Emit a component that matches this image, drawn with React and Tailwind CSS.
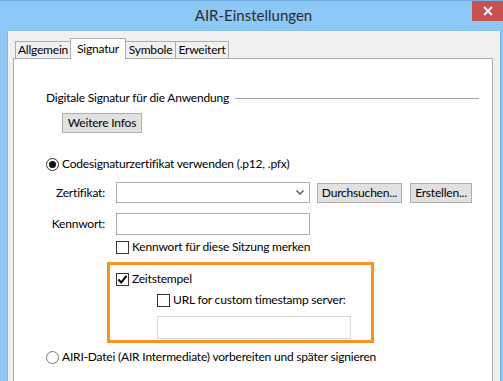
import React from "react";

const font = { fontFamily: "Lato, 'Liberation Sans', sans-serif" };

const Checkbox = ({ checked }) => (
  <span className="flex h-[13px] w-[13px] shrink-0 items-center justify-center border border-[#333] bg-white">
    {checked && (
      <svg width="11" height="11" viewBox="0 0 11 11">
        <path d="M1.5 5.5 L4.2 8.5 L9.5 1.8" fill="none" stroke="#000" strokeWidth="2" />
      </svg>
    )}
  </span>
);

const Radio = ({ checked }) => (
  <span
    className={`flex h-[13px] w-[13px] shrink-0 items-center justify-center rounded-full border bg-white ${
      checked ? "border-[#333]" : "border-[#777]"
    }`}
  >
    {checked && <span className="h-[7px] w-[7px] rounded-full bg-[#111]" />}
  </span>
);

const Button = ({ children, className = "" }) => (
  <div
    className={`flex h-[20px] items-center justify-center border border-[#adadad] bg-[#e1e1e1] text-[12px] text-black ${className}`}
  >
    {children}
  </div>
);

const Tab = ({ label, active, className = "" }) => (
  <div
    className={
      active
        ? `relative z-10 flex h-[21px] items-start justify-center border border-b-0 border-[#acacac] bg-white pt-[1px] ${className}`
        : `flex h-[18px] items-center justify-center border border-[#acacac] bg-[#f0f0f0] ${className}`
    }
  >
    {label}
  </div>
);

export default function App() {
  return (
    <div
      className="flex h-[381px] w-[503px] flex-col overflow-hidden border-t border-[#72aee3] bg-[#8cc7f5] text-[12px] tracking-[-0.2px] text-black"
      style={font}
    >
      {/* Titelleiste */}
      <div className="grid h-[30px] shrink-0 grid-cols-[1fr_auto_1fr]">
        <div />
        <div className="pl-[4px] pt-[3px] text-[15px] leading-[22px] tracking-normal text-[#2b2b2b]">AIR-Einstellungen</div>
        <div className="flex justify-end">
          <div className="flex h-[20px] w-[31px] items-center justify-center bg-[#c75050]">
            <svg width="10" height="10" viewBox="0 0 10 10">
              <path d="M1 1 L9 9 M9 1 L1 9" stroke="#fff" strokeWidth="1.8" />
            </svg>
          </div>
        </div>
      </div>

      {/* Fensterinhalt */}
      <div className="flex flex-1 pl-[7px] pr-[2px]">
        <div className="flex-1 border-l border-r border-[#7fb4e0] bg-[#f0f0f0] pt-[7px] pl-[5px]">
          <div className="relative z-10 -mb-px flex items-end pl-[2px]">
            <Tab label="Allgemein" className="w-[56px]" />
            <Tab label="Signatur" active className="-ml-px w-[56px]" />
            <Tab label="Symbole" className="-ml-px w-[51px]" />
            <Tab label="Erweitert" className="-ml-px w-[54px]" />
          </div>

          <div className="h-[400px] w-[480px] border border-[#acacac] bg-white pl-[32px]">
            {/* Gruppe */}
            <div className="mt-[31px] flex h-[16px] items-center pr-[13px] leading-[16px]">
              <span>Digitale Signatur für die Anwendung</span>
              <span className="ml-[6px] h-px flex-1 bg-[#a0a0a0]" />
            </div>

            <Button className="ml-[16px] mt-[7px] w-[80px]">Weitere Infos</Button>

            <div className="mt-[23px] flex h-[16px] items-center gap-[3px] leading-[16px]">
              <Radio checked />
              <span>Codesignaturzertifikat verwenden (.p12, .pfx)</span>
            </div>

            <div className="mt-[10px] flex items-center">
              <span className="w-[59px] text-right">Zertifikat:</span>
              <div className="ml-[11px] flex h-[21px] w-[194px] items-center justify-end border border-[#adadad] bg-white pr-[5px]">
                <svg width="8" height="5" viewBox="0 0 8 5">
                  <path d="M0.5 0.5 L4 4 L7.5 0.5" fill="none" stroke="#555" strokeWidth="1.4" />
                </svg>
              </div>
              <Button className="ml-[7px] w-[85px]">Durchsuchen...</Button>
              <Button className="ml-[8px] w-[62px]">Erstellen...</Button>
            </div>

            <div className="mt-[10px] flex items-center">
              <span className="w-[59px] text-right">Kennwort:</span>
              <div className="ml-[11px] h-[22px] w-[194px] border border-[#adadad] bg-white" />
            </div>

            <div className="ml-[70px] mt-[4px] flex h-[16px] items-center gap-[3px] leading-[16px]">
              <Checkbox />
              <span>Kennwort für diese Sitzung merken</span>
            </div>

            {/* Zeitstempel hervorgehoben */}
            <div className="ml-[61px] mt-[7px] h-[81px] w-[267px] border-[3px] border-[#f7931e] pl-[6px] pt-[7px]">
              <div className="flex h-[14px] items-center gap-[3px] leading-[14px]">
                <Checkbox checked />
                <span>Zeitstempel</span>
              </div>
              <div className="ml-[41px] mt-[7px] flex h-[14px] items-center gap-[3px] leading-[14px]">
                <Checkbox />
                <span>URL for custom timestamp server:</span>
              </div>
              <div className="ml-[41px] mt-[9px] h-[23px] w-[194px] border border-[#d9d9d9] bg-white" />
            </div>

            <div className="mt-[6px] flex h-[16px] items-center gap-[3px] leading-[16px]">
              <Radio />
              <span>AIRI-Datei (AIR Intermediate) vorbereiten und später signieren</span>
            </div>
          </div>
        </div>
      </div>
    </div>
  );
}
